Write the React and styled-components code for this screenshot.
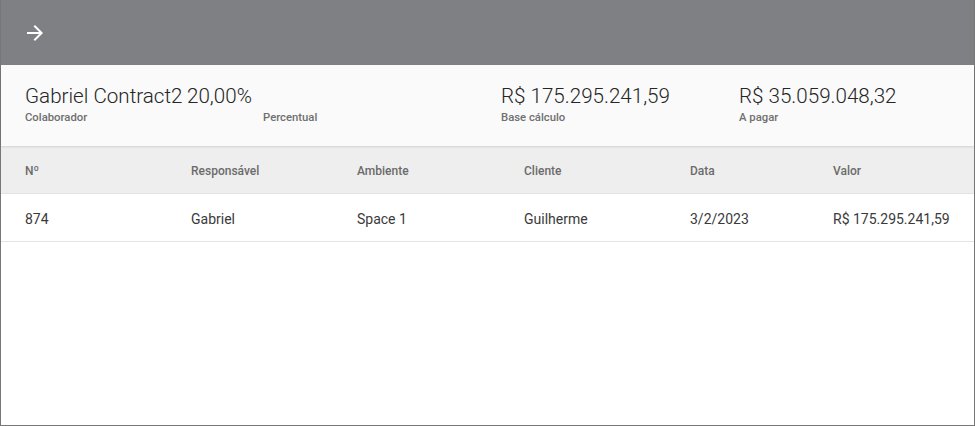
import React from 'react'
import styled, { createGlobalStyle } from 'styled-components'

const GlobalStyle = createGlobalStyle`
    html, body {
        margin: 0;
        padding: 0;
        background: #ffffff;
    }
    body {
        font-family: Roboto, "Liberation Sans", sans-serif;
    }
`;

const Page = styled.div`
    box-sizing: border-box;
    width: 975px;
    height: 426px;
    border: 1px solid #777777;
    border-top: none;
    display: flex;
    flex-direction: column;
    background: #ffffff;
`;

const TopBar = styled.header`
    height: 65px;
    background-color: #7f8084;
    display: flex;
    align-items: center;
    padding-left: 22px;
    flex-shrink: 0;
`;

const IconButton = styled.button`
    width: 24px;
    height: 24px;
    padding: 0;
    border: none;
    background: transparent;
    color: #ffffff;
    display: flex;
    cursor: pointer;
`;

const Summary = styled.section`
    position: relative;
    z-index: 1;
    background-color: #fafafa;
    box-shadow: 0 1px 2px rgba(0, 0, 0, 0.12);
    display: grid;
    grid-template-columns: repeat(4, 238px);
    padding: 19px 24px 0;
    height: 81px;
    box-sizing: border-box;
`;

const Stat = styled.div`
    display: flex;
    flex-direction: column;
    white-space: nowrap;
`;

const StatValue = styled.span`
    font-family: "Roboto Light", Roboto, "Liberation Sans", sans-serif;
    font-size: 20.6px;
    font-weight: 300;
    line-height: 24px;
    color: #262626;
    margin-left: ${p => p.pull ? `-${p.pull}px` : '0'};
`;

const StatLabel = styled.span`
    font-size: 11.3px;
    font-weight: 500;
    color: #6f6f6f;
    line-height: 14px;
    margin-top: 3px;
`;

const Row = styled.div`
    display: grid;
    grid-template-columns: 166px 166px 167px 166px 143px 1fr;
    align-items: center;
    padding-left: 24px;
    height: 48px;
    box-sizing: border-box;
    background-color: ${p => p.head ? '#eeeeee' : '#ffffff'};
    border-bottom: 1px solid ${p => p.head ? '#e2e2e2' : '#e4e4e4'};
`;

const Cell = styled.div`
    font-size: ${p => p.head ? '12px' : '14px'};
    font-weight: ${p => p.head ? 500 : 400};
    color: ${p => p.head ? '#6b6b6b' : '#3a3a3a'};
    white-space: nowrap;
    padding-top: 2px;
`;

const columns = ['Nº', 'Responsável', 'Ambiente', 'Cliente', 'Data', 'Valor']

const rows = [
    ['874', 'Gabriel', 'Space 1', 'Guilherme', '3/2/2023', 'R$ 175.295.241,59'],
]

const stats = [
    { value: 'Gabriel Contract2', label: 'Colaborador' },
    { value: '20,00%', label: 'Percentual', pull: 76 },
    { value: 'R$ 175.295.241,59', label: 'Base cálculo' },
    { value: 'R$ 35.059.048,32', label: 'A pagar' },
]

function App() {
    return (
        <>
            <GlobalStyle />
            <Page>
                <TopBar>
                    <IconButton aria-label="Avançar">
                        <svg width="24" height="24" viewBox="0 0 24 24" fill="currentColor">
                            <path d="M12 4l-1.41 1.41L16.17 11H4v2h12.17l-5.58 5.59L12 20l8-8z" />
                        </svg>
                    </IconButton>
                </TopBar>
                <Summary>
                    {stats.map(s => (
                        <Stat key={s.label}>
                            <StatValue pull={s.pull}>{s.value}</StatValue>
                            <StatLabel>{s.label}</StatLabel>
                        </Stat>
                    ))}
                </Summary>
                <Row head>
                    {columns.map(c => <Cell head key={c}>{c}</Cell>)}
                </Row>
                {rows.map(r => (
                    <Row key={r[0]}>
                        {r.map((v, i) => <Cell key={i}>{v}</Cell>)}
                    </Row>
                ))}
            </Page>
        </>
    )
}

export default App
